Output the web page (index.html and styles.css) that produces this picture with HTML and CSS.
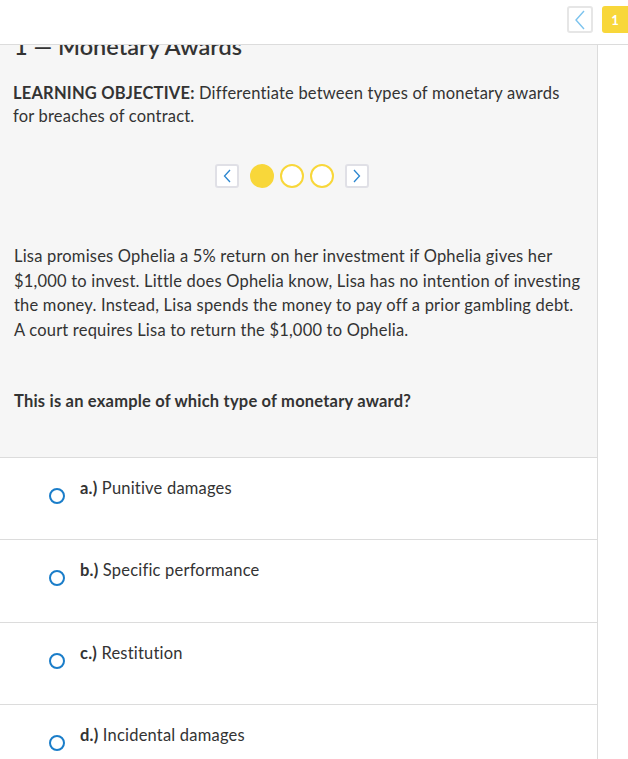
FILE: index.html
```html
<!DOCTYPE html>
<html>
<head>
<meta charset="utf-8">
<link rel="stylesheet" href="styles.css">
</head>
<body>
<header class="topbar">
  <button class="back-btn" aria-label="Back">
    <svg width="12" height="20" viewBox="0 0 12 20"><path d="M10 1 L2 10 L10 19" fill="none" stroke="#7cc3ee" stroke-width="1.4"/></svg>
  </button>
  <div class="badge">1</div>
</header>
<div class="layout">
  <main class="main">
    <section class="prompt">
      <h1 class="title">1 — Monetary Awards</h1>
      <p class="objective"><strong>LEARNING OBJECTIVE:</strong> Differentiate between types of monetary awards for breaches of contract.</p>
      <div class="pager">
        <button class="pg-btn" aria-label="Previous">
          <svg width="8" height="14" viewBox="0 0 8 14"><path d="M7 1 L1.5 7 L7 13" fill="none" stroke="#2b86cf" stroke-width="1.3"/></svg>
        </button>
        <span class="dot filled"></span>
        <span class="dot"></span>
        <span class="dot"></span>
        <button class="pg-btn next" aria-label="Next">
          <svg width="8" height="14" viewBox="0 0 8 14"><path d="M1 1 L6.5 7 L1 13" fill="none" stroke="#2b86cf" stroke-width="1.3"/></svg>
        </button>
      </div>
      <p class="scenario">Lisa promises Ophelia a 5% return on her investment if Ophelia gives her $1,000 to invest. Little does Ophelia know, Lisa has no intention of investing the money. Instead, Lisa spends the money to pay off a prior gambling debt. A court requires Lisa to return the $1,000 to Ophelia.</p>
      <p class="question">This is an example of which type of monetary award?</p>
    </section>
    <ul class="options">
      <li class="option"><span class="radio"></span><span class="opt-text"><b>a.)</b> Punitive damages</span></li>
      <li class="option"><span class="radio"></span><span class="opt-text"><b>b.)</b> Specific performance</span></li>
      <li class="option"><span class="radio"></span><span class="opt-text"><b>c.)</b> Restitution</span></li>
      <li class="option"><span class="radio"></span><span class="opt-text"><b>d.)</b> Incidental damages</span></li>
    </ul>
  </main>
  <aside class="side"></aside>
</div>
</body>
</html>
```

FILE: styles.css
```css
* { box-sizing: border-box; }
html, body { margin: 0; padding: 0; background: #fff; }
body {
  font-family: "Lato", "Open Sans", sans-serif;
  color: #333;
  width: 628px;
  height: 759px;
  overflow: hidden;
  letter-spacing: 0.2px;
}
.topbar {
  height: 45px;
  border-bottom: 1px solid #dcdcdc;
  display: flex;
  justify-content: flex-end;
  align-items: flex-start;
  padding-top: 6px;
  gap: 9px;
}
.back-btn {
  width: 26px;
  height: 27px;
  border: 2px solid #e6e6e6;
  border-radius: 3px;
  background: #fff;
  padding: 0;
  display: flex;
  align-items: center;
  justify-content: center;
}
.badge {
  width: 26px;
  height: 27px;
  background: #f8d73a;
  border-radius: 3px 0 0 3px;
  color: #fff;
  font-weight: 700;
  font-size: 13px;
  display: flex;
  align-items: center;
  justify-content: center;
}
.layout {
  display: flex;
  height: 714px;
}
.main {
  width: 598px;
  border-right: 1px solid #dcdcdc;
  overflow: hidden;
}
.side { flex: 1; }
.prompt {
  background: #f6f6f6;
  padding: 0 14px 0 14px;
  height: 412px;
  overflow: hidden;
}
.title {
  margin: -13px 0 0 0;
  font-size: 23.5px;
  font-weight: 600;
  line-height: 28px;
  color: #333;
  letter-spacing: 0;
}
.objective {
  margin: 22px 0 0 -1px;
  font-size: 16.5px;
  line-height: 23px;
}
.objective strong { font-weight: 700; }
.pager {
  margin-top: 36px;
  display: flex;
  align-items: center;
  justify-content: center;
  gap: 6px;
  padding-right: 14px;
}
.pg-btn {
  width: 24px;
  height: 24px;
  border: 2px solid #e0e0e6;
  border-radius: 3px;
  background: #fff;
  padding: 0;
  display: flex;
  align-items: center;
  justify-content: center;
  margin-right: 5px;
}
.pg-btn.next { margin-right: 0; margin-left: 5px; }
.dot {
  width: 24px;
  height: 24px;
  border-radius: 50%;
  border: 2px solid #f8d73a;
  background: #fff;
}
.dot.filled { background: #f8d73a; }
.scenario {
  margin: 56px 0 0 0;
  font-size: 16.5px;
  line-height: 24.7px;
}
.question {
  margin: 46px 0 0 0;
  font-size: 16.5px;
  font-weight: 700;
  line-height: 24px;
}
.options {
  list-style: none;
  margin: 0;
  padding: 0;
}
.option {
  height: 82.3px;
  border-top: 1px solid #dcdcdc;
  display: flex;
  align-items: flex-start;
  padding: 18px 0 0 49px;
}
.radio {
  width: 16px;
  height: 16px;
  border: 2px solid #1a7dc9;
  border-radius: 50%;
  margin-top: 12px;
  margin-right: 15px;
  flex: none;
}
.opt-text {
  font-size: 16.5px;
  line-height: 24px;
}
.opt-text b { font-weight: 700; }
```
